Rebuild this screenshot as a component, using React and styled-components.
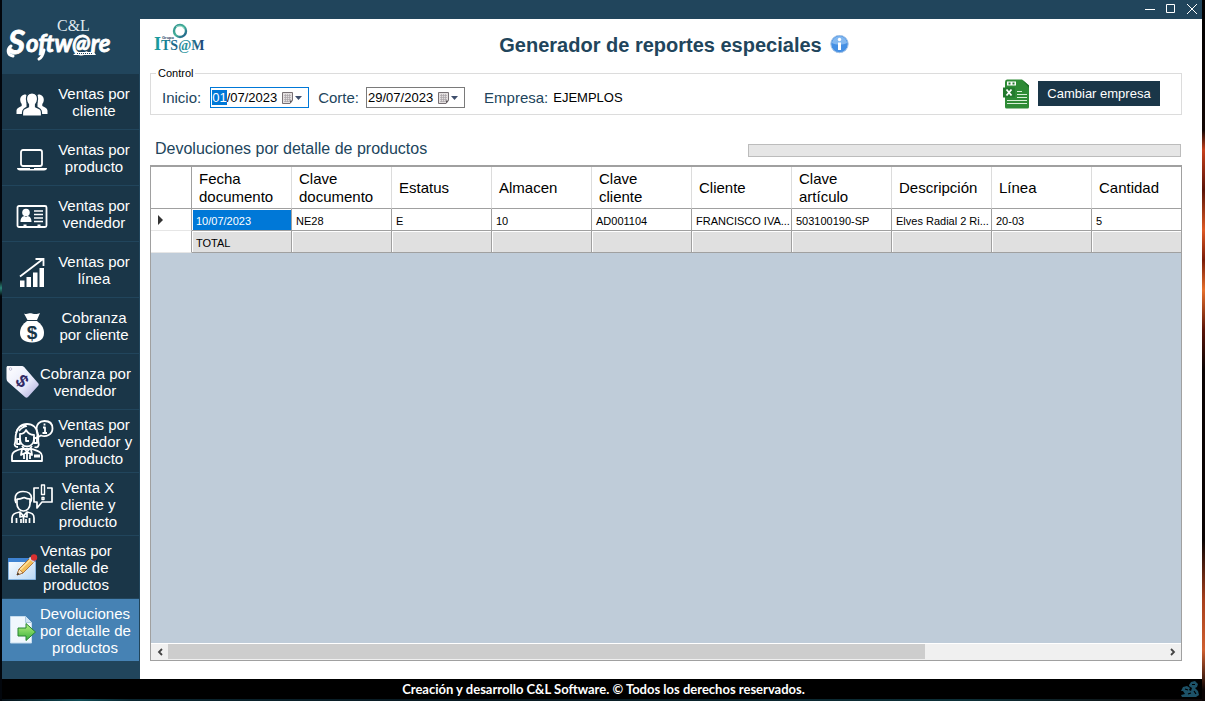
// src/App.jsx
import React, { useEffect, useRef, useState } from 'react';
import styled, { createGlobalStyle } from 'styled-components';

const GlobalStyle = createGlobalStyle`
  * {
    box-sizing: border-box;
  }

  body {
    margin: 0;
    background: #02060c;
    font-family: 'Liberation Sans', Arial, sans-serif;
  }

  button, input {
    font-family: inherit;
  }
`;

const Desktop = styled.div`
  display: flex;
  min-height: 100vh;
  padding: 0 3px 2px 2px;
  background:
    linear-gradient(#000 0, #120604 130px, #c8401c 150px, #5a1408 190px, #e05a24 230px, #7a1c08 260px,
      #e8702c 290px, #5a1408 330px, #0a0404 370px, #0a0404 540px, #a8401c 600px, #d06030 650px, #0a0404 690px) right / 3px 100% no-repeat,
    linear-gradient(#02060c 0, #02060c 280px, #2a8478 288px, #02060c 296px) left / 2px 100% no-repeat,
    linear-gradient(90deg, #061018, #0e4a54 80px, #0a2630 130px, #081820 40%, #0c3038 80%, #100808) bottom / 100% 2px no-repeat;
`;

const Window = styled.div`
  display: flex;
  flex: 1;
  flex-direction: column;
  min-width: 0;
`;

const Body = styled.div`
  display: flex;
  flex: 1;
`;

const Sidebar = styled.aside`
  flex: 0 0 138px;
  background: #21455c;
`;

const Brand = styled.div`
  height: 74px;
  padding: 16px 0 0 4px;
`;

const Menu = styled.nav`
  display: flex;
  flex-direction: column;
`;

const MenuItem = styled.button`
  display: flex;
  align-items: center;
  height: ${(props) => (props.$tall ? '63px' : '56px')};
  margin-right: 1px;
  padding: 0;
  border: none;
  border-bottom: 1px solid #21455c;
  background-color: ${(props) => (props.$active ? '#4682b4' : '#1a3648')};
  color: #fff;
  font-size: 15px;
  line-height: 17px;
  cursor: pointer;

  &:hover {
    background-color: #4682b4;
  }
`;

const MenuIcon = styled.span`
  display: flex;
  flex: none;
  justify-content: center;
  width: ${(props) => (props.$size === 'small' ? '38px' : '56px')};
  padding-top: ${(props) => (props.$size ? '0' : '4px')};
  padding-left: 4px;
`;

const MenuText = styled.span`
  flex: none;
  width: ${(props) => (props.$wide ? '90px' : '72px')};
  margin-left: ${(props) => (props.$pull ? '-6px' : '0')};
  text-align: center;
  white-space: pre;
`;

const Content = styled.div`
  display: flex;
  flex: 1;
  flex-direction: column;
  min-width: 0;
`;

const TitleBar = styled.div`
  display: flex;
  justify-content: flex-end;
  height: 19px;
  padding-right: 3px;
  gap: 7px;
  background: #21455c;
`;

const WindowButton = styled.button`
  display: flex;
  align-items: center;
  justify-content: center;
  width: 14px;
  height: 18px;
  padding: 0;
  border: none;
  background: none;
  cursor: pointer;
`;

const Main = styled.main`
  display: flex;
  flex: 1;
  flex-direction: column;
  min-width: 0;
  padding: 0 20px 18px 10px;
  background: #fff;
`;

const Header = styled.header`
  display: grid;
  grid-template-columns: 1fr auto 1fr;
  height: 48px;
`;

const CompanyLogo = styled.div`
  padding: 4px 0 0 3px;
`;

const Title = styled.h1`
  display: flex;
  align-items: center;
  gap: 8px;
  margin: 4px 0 0 16px;
  color: #21455c;
  font-size: 20px;
  line-height: 24px;
`;

const Control = styled.fieldset`
  height: 48px;
  min-width: 0;
  margin: 0;
  padding: 0 21px 0 11px;
  border: 1px solid #dcdcdc;
`;

const Legend = styled.legend`
  margin-left: -6px;
  padding: 0 2px;
  color: #000;
  font-size: 11px;
  line-height: 12px;
`;

const ControlRow = styled.div`
  display: flex;
  align-items: center;
  height: 37px;
`;

const Label = styled.label`
  margin-right: ${(props) => props.$gap};
  color: #21455c;
  font-size: 15px;
`;

const DateBox = styled.div`
  display: flex;
  align-items: center;
  width: 99px;
  height: 21px;
  margin-right: ${(props) => (props.$last ? '19px' : '9px')};
  border: 1px solid ${(props) => (props.$active ? '#0078d7' : '#7a7a7a')};
  background: #fff;
`;

const DateInput = styled.input`
  flex: 1;
  min-width: 0;
  height: 17px;
  padding: 0 0 0 1px;
  border: none;
  outline: none;
  background: none;
  color: #000;
  font-size: 13px;

  &::selection {
    background: #0078d7;
    color: #fff;
  }
`;

const CalendarButton = styled.button`
  display: flex;
  width: 27px;
  padding: 0;
  border: none;
  background: none;
`;

const Company = styled.output`
  color: #000;
  font-size: 13px;
`;

const ExcelButton = styled.button`
  display: flex;
  margin: -8px 0 0 auto;
  padding: 0;
  border: none;
  background: none;
  cursor: pointer;
`;

const ChangeButton = styled.button`
  width: 122px;
  height: 25px;
  margin: -8px 0 0 8px;
  padding: 0;
  border: none;
  background-color: #1a3648;
  color: #fff;
  font-size: 13px;
  cursor: pointer;
`;

const ReportBar = styled.div`
  display: flex;
  align-items: center;
  justify-content: space-between;
  height: 50px;
  padding-top: 18px;
`;

const ReportTitle = styled.h2`
  margin: 0 0 0 5px;
  color: #21455c;
  font-size: 16px;
  font-weight: normal;
`;

const Progress = styled.progress`
  appearance: none;
  width: 42%;
  height: 13px;
  margin: 2px 1px 0 0;
  border: 1px solid #bcbcbc;
  background: #e6e6e6;

  &::-webkit-progress-bar {
    background: #e6e6e6;
  }
`;

const GridPanel = styled.section`
  display: flex;
  flex: 1;
  flex-direction: column;
  min-width: 0;
  border: 1px solid #a0a0a0;
  border-top-width: 2px;
  background: #bfccd9;
`;

const TableWrap = styled.div`
  flex: 1;
  overflow: hidden;
`;

const Table = styled.table`
  width: 1041px;
  border-collapse: separate;
  border-spacing: 0;
  table-layout: fixed;
  background: #fff;
`;

const HeadCell = styled.th`
  width: ${(props) => (props.$marker ? '41px' : '100px')};
  height: 42px;
  padding: 1px 7px 0;
  border-right: 1px solid ${(props) => (props.$marker ? '#a0a0a0' : '#dcdcdc')};
  border-bottom: 1px solid #a0a0a0;
  color: #000;
  font-size: 15px;
  font-weight: normal;
  line-height: 18px;
  text-align: left;
`;

const MarkerCell = styled.th`
  padding: 0 7px;
  border-right: 1px solid #a0a0a0;
  border-bottom: 1px solid #e6e6e6;
  line-height: 0;
  text-align: left;
`;

const Cell = styled.td`
  height: 22px;
  padding: 2px 0 0 4px;
  border-right: 1px solid #a0a0a0;
  border-bottom: 1px solid #a0a0a0;
  background-color: ${(props) => (props.$selected ? '#0078d7' : props.$total ? '#e0e0e0' : '#fff')};
  box-shadow: ${(props) => (props.$total || props.$selected ? 'inset 1px 1px 0 #fff' : 'none')};
  color: ${(props) => (props.$selected ? '#fff' : '#000')};
  font-size: 11px;
  white-space: nowrap;
`;

const ScrollBar = styled.div`
  display: flex;
  height: 17px;
  border-top: 1px solid #fff;
  background: #f0f0f0;
`;

const ScrollButton = styled.button`
  display: flex;
  align-items: center;
  justify-content: center;
  flex: 0 0 17px;
  padding: 0;
  border: none;
  background: none;
`;

const ScrollTrack = styled.div`
  flex: 1;
`;

const ScrollThumb = styled.div`
  width: 76%;
  height: 15px;
  background: #cdcdcd;
`;

const Footer = styled.footer`
  display: grid;
  grid-template-columns: 1fr auto 1fr;
  align-items: center;
  height: 20px;
  padding: 0 3px 0 6px;
  background: #000;
  color: #fff;
  font-family: Lato, 'Liberation Sans', sans-serif;
  font-size: 13px;
  font-weight: bold;
`;

const FooterIcon = styled.span`
  display: flex;
  justify-self: end;
`;

const BrandLogo = () => (
  <svg width="112" height="48" viewBox="0 0 112 48" role="img" aria-label="C&L Software">
    <text x="51" y="15" fill="#dfe8ee" fontFamily="Liberation Serif, serif" fontSize="16">C&amp;L</text>
    <g fill="#fff" stroke="#fff" strokeWidth="0.800" fontFamily="Lato, sans-serif" fontWeight="bold" fontStyle="italic">
      <text x="2" y="38" fontSize="33">S</text>
      <text x="20" y="36" fontSize="24">oftw@re</text>
    </g>
    <path d="M5 30c-4 3-4 9 2 10M38 34c-1 5-3 8-5 9" fill="none" stroke="#fff" strokeWidth="3" strokeLinecap="round" />
    <path d="M71 36h17l2 3H67z" fill="#fff" />
    <path d="M71 37.500h15" stroke="#21455c" strokeDasharray="1 1" />
  </svg>
);

const ItsamLogo = () => (
  <svg width="54" height="30" viewBox="0 0 54 30" role="img" aria-label="Grupo ITSAM">
    <defs>
      <linearGradient id="ring" x1="0" y1="0" x2="1" y2="1">
        <stop offset="0" stopColor="#2f8f8c" />
        <stop offset="0.5" stopColor="#46b39a" />
        <stop offset="1" stopColor="#174f86" />
      </linearGradient>
      <linearGradient id="word" x1="0" x2="1">
        <stop offset="0" stopColor="#19a3a0" />
        <stop offset="0.45" stopColor="#1f6288" />
        <stop offset="0.6" stopColor="#2a9aa0" />
        <stop offset="1" stopColor="#1d3f74" />
      </linearGradient>
    </defs>
    <circle cx="27" cy="8" r="6" fill="none" stroke="url(#ring)" strokeWidth="2.400" />
    <path d="M23 4c3-2 7-1 8 2" fill="none" stroke="#9fe0cc" strokeWidth="1" />
    <text x="1" y="27" fill="url(#word)" fontFamily="Liberation Serif, serif" fontWeight="bold">
      <tspan fontSize="18">I</tspan>
      <tspan fontSize="14">TS@M</tspan>
    </text>
    <text x="9" y="16" fill="#21455c" fontSize="4" fontWeight="bold">Grupo</text>
  </svg>
);

const ClientsIcon = () => (
  <svg width="32" height="24" viewBox="0 0 32 24" fill="#fff">
    <path d="M9.500 2.500C6 2.500 4 5 4.200 8c.1 2 .8 3 1.500 4v2C3 15.500.500 16 .500 19v3h10V3z" />
    <path d="M22.500 2.500c3.500 0 5.500 2.500 5.300 5.500-.1 2-.8 3-1.500 4v2c2.700 1.500 5.200 2 5.200 5v3h-10V3z" />
    <path d="M16 1c-4 0-5.800 2.800-5.500 6.500.2 2.400 1 4 2 5v2.300c-4 1.700-6 2.500-6 6V24h19v-3.200c0-3.500-2-4.300-6-6v-2.300c1-1 1.800-2.600 2-5C21.800 3.800 20 1 16 1z" stroke="#1a3648" strokeWidth="1.200" />
  </svg>
);

const LaptopIcon = () => (
  <svg width="32" height="24" viewBox="0 0 32 24" fill="none" stroke="#fff">
    <rect x="5" y="2" width="21" height="16" rx="2" strokeWidth="1.800" />
    <path d="M1 20h30c0 1.600-1 2.500-3 2.500H4C2 22.500 1 21.600 1 20z" fill="#fff" stroke="none" />
    <path d="M14 20.500h4" stroke="#1a3648" />
  </svg>
);

const CardIcon = () => (
  <svg width="32" height="26" viewBox="0 0 32 26" fill="#fff">
    <rect x="1.500" y="3" width="29" height="21" rx="1.500" fill="none" stroke="#fff" strokeWidth="1.800" />
    <circle cx="10" cy="9.500" r="3.800" />
    <path d="M4.500 19c0-4 1.500-5.500 4-6l1.500 1 1.500-1c2.500.5 4 2 4 6z" />
    <path d="M18 8h9M18 11.500h9M18 15h9M18 18.500h9" stroke="#fff" strokeWidth="1.500" />
    <path d="M7.500 21.500h3V24h-3zM21.500 21.500h3V24h-3z" />
  </svg>
);

const ChartIcon = () => (
  <svg width="28" height="32" viewBox="0 0 28 32" fill="#fff">
    <path d="M2 24.500h4.500V31H2zM8.500 21H13v10H8.500zM15 16.500h4.500V31H15zM21.500 12H26v19h-4.500z" />
    <path d="M2 20.500L25 3M17.500 3H25.500v7" fill="none" stroke="#fff" strokeWidth="1.800" />
  </svg>
);

const MoneyBagIcon = () => (
  <svg width="28" height="32" viewBox="0 0 28 32" fill="#fff">
    <path d="M6 1.500c3 1.500 5-.8 8 0s5 1 8-.5L19 8H9.500z" />
    <path d="M9 9h10c4 3 7 6.500 7 12 0 6-4.500 9.500-12 9.500S2 27 2 21c0-5.500 3-9 7-12z" />
    <text x="14" y="27" fill="#1a3648" fontSize="19" fontWeight="bold" textAnchor="middle">$</text>
  </svg>
);

const TagIcon = () => (
  <svg width="34" height="34" viewBox="0 0 34 34">
    <defs>
      <linearGradient id="tag" x1="0" y1="0" x2="1" y2="1">
        <stop offset="0" stopColor="#fff" />
        <stop offset="0.600" stopColor="#e6e8fa" />
        <stop offset="1" stopColor="#a9a6d8" />
      </linearGradient>
    </defs>
    <path d="M2 1h13c2 0 3 .5 4 2l13 15c1 1 1 2 0 3L22 32c-1 1-2 1-3 0L2 17c-1-1-1.500-2-1.500-4V3C.500 1.500 1 1 2 1z" fill="url(#tag)" />
    <circle cx="4.500" cy="4" r="1.300" fill="#fff" stroke="#9a97bd" strokeWidth="0.600" />
    <text x="16" y="22" fill="#332a66" fontSize="18" fontWeight="bold" textAnchor="middle" transform="rotate(45 16 16)">$</text>
  </svg>
);

const SellerIcon = () => (
  <svg width="44" height="44" viewBox="0 0 44 44" fill="none" stroke="#fff" strokeWidth="1.800" strokeLinejoin="round">
    <path d="M2 42v-5c0-4 3-5 9-7h11c6 2 10 3 10 7v5z" />
    <path d="M8 28c-3 0-4-2-3-4s0-5 1-9C7 9 11 5 17 5s10 4 11 10c1 4-.5 6 .5 9s-1 5-4 4" />
    <path d="M10 15v5c0 4 3 7.500 7 7.500s7-3.500 7-7.500v-4c-4 0-6-1.500-8-5-1 2.500-3 4-6 4z" />
    <path d="M6 14c1-5 5-8 10-8M9 12c2-3 4-4 8-5M7 20h3v5H7zM24 19h3v5h-3z" />
    <path d="M12 27l5 6 5-6M12 30l-1 6 6-3 5 3-1-6M17 33v8M14 35v5M20 35v5M16 18v4h3" />
    <path d="M24 37h6" strokeWidth="3" />
    <path d="M27.500 16l-.5 2.500L31 16.500c5 2 11.500-1 11.500-7S38 2 34.500 2C29 2 26.500 6 26.500 9.500c0 2.500.5 4.500 1 6.500z" />
    <path d="M34.500 4.500v2M33 8.500h2v5M32.500 14h4.500" />
  </svg>
);

const CustomerIcon = () => (
  <svg width="44" height="42" viewBox="0 0 44 42" fill="none" stroke="#fff" strokeWidth="1.700" strokeLinejoin="round">
    <path d="M2 40v-5c0-4 3-5 8-6l3.500 4 3.500-4c5 1 7 2 7 6v5M6.500 40v-5M19.500 40v-5M13.500 33v7M10 30v4l3.500-1 3.500 1v-4M11 40v-4M16 40v-4" />
    <path d="M7 16v5c0 4 3 7 6.500 7s6.500-3 6.500-7v-5" />
    <path d="M6 20c-1-2-1-5-.500-7C7 9 10 8.500 13 8.500c5 0 8.500 2.500 8.500 6.500 0 2-.5 4-1.500 5M6.500 16c3 .5 6-1 7.500-1.500 2 1 4 1.500 6.500 1.500" />
    <path d="M29 5h-5v14h3v6l5-6h10V5h-5" />
    <path d="M31.500 2h3v9.500h-3zM32 14.500h2v2h-2z" strokeWidth="1.400" />
  </svg>
);

const EditIcon = () => (
  <svg width="30" height="28" viewBox="0 0 30 28">
    <defs>
      <linearGradient id="form" x1="0" y1="0" x2="1" y2="1">
        <stop offset="0" stopColor="#fff" />
        <stop offset="1" stopColor="#b8d7f5" />
      </linearGradient>
    </defs>
    <path d="M.500 5.500h27v21H.500z" fill="url(#form)" stroke="#86b4e0" />
    <path d="M0 5h28v4H0z" fill="#3f83d2" />
    <path d="M9 22l2-6L22.500 4.500l4 4L15 20z" fill="#f4bd58" stroke="#a3622a" strokeWidth="0.800" />
    <path d="M12 17L23 6" stroke="#ffe3a0" strokeWidth="1.400" />
    <path d="M9 22l2-6 4 4z" fill="#fbe6c4" stroke="#855129" strokeWidth="0.600" />
    <path d="M9 22l.800-2.400 1.600 1.600z" fill="#222" />
    <path d="M21.500 4.500l4.500 4.500" stroke="#d6dbe4" strokeWidth="2" />
    <circle cx="26" cy="4.500" r="3.200" fill="#d83030" />
  </svg>
);

const ReturnIcon = () => (
  <svg width="28" height="30" viewBox="0 0 28 30">
    <defs>
      <linearGradient id="arrow" x1="0" y1="0" x2="0" y2="1">
        <stop offset="0" stopColor="#b8f080" />
        <stop offset="1" stopColor="#35b03a" />
      </linearGradient>
    </defs>
    <path d="M1.500 1.500h15l6 6V28h-21z" fill="#f0f7fd" stroke="#c5dcee" />
    <path d="M16.500 1.500v6h6" fill="#d0e4f3" stroke="#a9c8df" />
    <path d="M9 13h8V8.500L26.500 17 17 25.500V21H9z" fill="url(#arrow)" stroke="#278432" />
  </svg>
);

const InfoIcon = () => (
  <svg width="19" height="20" viewBox="0 0 19 20">
    <circle cx="9.500" cy="9" r="8.700" fill="#4590e4" stroke="#a7c4e5" strokeWidth="1" />
    <path d="M2 8c1-9 14-9 15 0-4 2-11 2-15 0z" fill="#83b8f0" />
    <circle cx="9.500" cy="4.500" r="1.700" fill="#fff" />
    <path d="M8 7.500h3V15H8z" fill="#fff" />
  </svg>
);

const CalendarIcon = () => (
  <svg width="22" height="12" viewBox="0 0 22 12">
    <path d="M1.500.500h10v8l-2.500 3H1.500z" fill="#e4e0e0" stroke="#777074" />
    <path d="M3 3.500h7M3 5.500h7M3 7.500h7M3 9.500h5M4.500 2v8M6.500 2v8M8.500 2v8" stroke="#a9a4a7" strokeWidth="0.700" />
    <path d="M9 11.500v-3h2.500z" fill="#5b5558" />
    <path d="M14 4h7l-3.500 4z" fill="#3e4e6c" />
  </svg>
);

const ExcelIcon = () => (
  <svg width="27" height="30" viewBox="0 0 27 30">
    <path d="M4 .500h15l7 6V28q0 1.500-1.500 1.500h-21Q2 29.500 2 28V3Q2 .500 4 .500z" fill="#2e8b36" />
    <path d="M19 .500l7 6V9z" fill="#1f6e29" />
    <path d="M0 8.500h12v10H0z" fill="#237a2e" />
    <path d="M4 2.500h9v4H4z" fill="#fff" />
    <path d="M5.500 4.500h2M9.500 4.500h2" stroke="#237a2e" strokeWidth="2" />
    <path d="M3.500 10.500l5 6M8.500 10.500l-5 6" stroke="#fff" strokeWidth="1.800" />
    <path d="M14 12.500h5M14 15.500h10M14 18.500h10M4 21.500h20M4 24.500h20" stroke="#d8f0d8" strokeWidth="1.200" />
  </svg>
);

const DragonIcon = () => (
  <svg width="18" height="16" viewBox="0 0 18 16" fill="#1d5268">
    <path d="M8 4l2-3 4-1 3 3-1 3-2 1 3 3 1 4-3 2H1l-1-2 4-1-2-3-2 0 2-4 4-1 3 2-1 2 2 1 1-3-3-2z" />
    <path d="M11 3.500l3 0M4 8l3 1M7 13l3-1M13 10l2 3" stroke="#000" strokeWidth="1.200" />
  </svg>
);

const menuItems = [
  { text: 'Ventas por\ncliente', icon: <ClientsIcon /> },
  { text: 'Ventas por\nproducto', icon: <LaptopIcon /> },
  { text: 'Ventas por\nvendedor', icon: <CardIcon /> },
  { text: 'Ventas por\nlínea', icon: <ChartIcon /> },
  { text: 'Cobranza\npor cliente', icon: <MoneyBagIcon /> },
  { text: 'Cobranza por\nvendedor', icon: <TagIcon />, size: 'small' },
  { text: 'Ventas por\nvendedor y\nproducto', icon: <SellerIcon />, size: 'large', tall: true },
  { text: 'Venta X\ncliente y\nproducto', icon: <CustomerIcon />, size: 'large', tall: true, pull: true },
  { text: 'Ventas por\ndetalle de\nproductos', icon: <EditIcon />, size: 'small', tall: true, narrow: true },
  { text: 'Devoluciones\npor detalle de\nproductos', icon: <ReturnIcon />, size: 'small', tall: true },
];

const columns = [
  'Fecha documento',
  'Clave documento',
  'Estatus',
  'Almacen',
  'Clave cliente',
  'Cliente',
  'Clave artículo',
  'Descripción',
  'Línea',
  'Cantidad',
];

const row = [
  '10/07/2023',
  'NE28',
  'E',
  '10',
  'AD001104',
  'FRANCISCO IVA...',
  '503100190-SP',
  'Elves Radial 2 Ri...',
  '20-03',
  '5',
];

const App = () => {
  const [active, setActive] = useState(9);
  const [inicio, setInicio] = useState('01/07/2023');
  const [corte, setCorte] = useState('29/07/2023');
  const inicioRef = useRef(null);

  useEffect(() => {
    inicioRef.current.focus();
    inicioRef.current.setSelectionRange(0, 2);
  }, []);

  return (
    <Desktop>
      <GlobalStyle />
      <Window>
        <Body>
          <Sidebar>
            <Brand>
              <BrandLogo />
            </Brand>
            <Menu>
              {menuItems.map((item, index) => (
                <MenuItem
                  key={item.text}
                  type="button"
                  $tall={item.tall}
                  $active={index === active}
                  onClick={() => setActive(index)}
                >
                  <MenuIcon $size={item.size}>{item.icon}</MenuIcon>
                  <MenuText $wide={item.size === 'small' && !item.narrow} $pull={item.pull}>
                    {item.text}
                  </MenuText>
                </MenuItem>
              ))}
            </Menu>
          </Sidebar>

          <Content>
            <TitleBar>
              <WindowButton type="button" aria-label="Minimizar">
                <svg width="10" height="10" stroke="#fff"><path d="M0 5.500h10" /></svg>
              </WindowButton>
              <WindowButton type="button" aria-label="Maximizar">
                <svg width="10" height="10" fill="none" stroke="#fff"><path d="M.500.500h8v8h-8z" /></svg>
              </WindowButton>
              <WindowButton type="button" aria-label="Cerrar">
                <svg width="10" height="10" stroke="#fff"><path d="M0 0l10 10M10 0L0 10" /></svg>
              </WindowButton>
            </TitleBar>

            <Main>
              <Header>
                <CompanyLogo>
                  <ItsamLogo />
                </CompanyLogo>
                <Title>
                  Generador de reportes especiales
                  <InfoIcon />
                </Title>
              </Header>

              <Control>
                <Legend>Control</Legend>
                <ControlRow>
                  <Label htmlFor="inicio" $gap="9px">Inicio:</Label>
                  <DateBox $active>
                    <DateInput
                      id="inicio"
                      ref={inicioRef}
                      value={inicio}
                      onChange={(e) => setInicio(e.target.value)}
                    />
                    <CalendarButton type="button" aria-label="Calendario de inicio">
                      <CalendarIcon />
                    </CalendarButton>
                  </DateBox>
                  <Label htmlFor="corte" $gap="7px">Corte:</Label>
                  <DateBox $last>
                    <DateInput id="corte" value={corte} onChange={(e) => setCorte(e.target.value)} />
                    <CalendarButton type="button" aria-label="Calendario de corte">
                      <CalendarIcon />
                    </CalendarButton>
                  </DateBox>
                  <Label htmlFor="empresa" $gap="5px">Empresa:</Label>
                  <Company id="empresa">EJEMPLOS</Company>
                  <ExcelButton type="button" aria-label="Exportar a Excel">
                    <ExcelIcon />
                  </ExcelButton>
                  <ChangeButton type="button">Cambiar empresa</ChangeButton>
                </ControlRow>
              </Control>

              <ReportBar>
                <ReportTitle>Devoluciones por detalle de productos</ReportTitle>
                <Progress value="0" max="100" aria-label="Progreso" />
              </ReportBar>

              <GridPanel>
                <TableWrap>
                  <Table>
                    <thead>
                      <tr>
                        <HeadCell $marker />
                        {columns.map((column) => (
                          <HeadCell key={column} scope="col">{column}</HeadCell>
                        ))}
                      </tr>
                    </thead>
                    <tbody>
                      <tr>
                        <MarkerCell>
                          <svg width="6" height="10" fill="#333"><path d="M0 0l5 5-5 5z" /></svg>
                        </MarkerCell>
                        {row.map((value, index) => (
                          <Cell key={columns[index]} $selected={index === 0}>{value}</Cell>
                        ))}
                      </tr>
                      <tr>
                        <MarkerCell />
                        {columns.map((column, index) => (
                          <Cell key={column} $total>{index === 0 ? 'TOTAL' : ''}</Cell>
                        ))}
                      </tr>
                    </tbody>
                  </Table>
                </TableWrap>
                <ScrollBar>
                  <ScrollButton type="button" aria-label="Izquierda">
                    <svg width="6" height="8" fill="none" stroke="#444" strokeWidth="1.800"><path d="M5 1L2 4l3 3" /></svg>
                  </ScrollButton>
                  <ScrollTrack>
                    <ScrollThumb />
                  </ScrollTrack>
                  <ScrollButton type="button" aria-label="Derecha">
                    <svg width="6" height="8" fill="none" stroke="#444" strokeWidth="1.800"><path d="M1 1l3 3-3 3" /></svg>
                  </ScrollButton>
                </ScrollBar>
              </GridPanel>
            </Main>
          </Content>
        </Body>

        <Footer>
          <span />
          <span>Creación y desarrollo C&amp;L Software. © Todos los derechos reservados.</span>
          <FooterIcon>
            <DragonIcon />
          </FooterIcon>
        </Footer>
      </Window>
    </Desktop>
  );
};

export default App;
